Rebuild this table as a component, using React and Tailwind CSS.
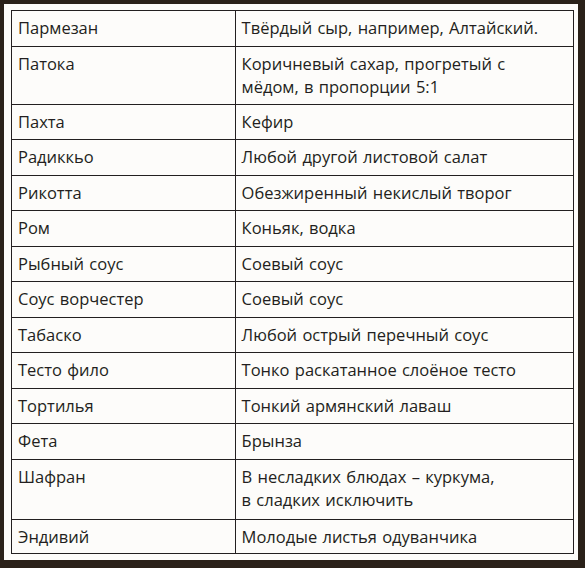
import React from "react";

const rows = [
  ["Пармезан", ["Твёрдый сыр, например, Алтайский."], "h-[36px]"],
  ["Патока", ["Коричневый сахар, прогретый с", "мёдом, в пропорции 5:1"], "h-[58px]"],
  ["Пахта", ["Кефир"], "h-[35px]"],
  ["Радиккьо", ["Любой другой листовой салат"], "h-[36px]"],
  ["Рикотта", ["Обезжиренный некислый творог"], "h-[35px]"],
  ["Ром", ["Коньяк, водка"], "h-[36px]"],
  ["Рыбный соус", ["Соевый соус"], "h-[35px]"],
  ["Соус ворчестер", ["Соевый соус"], "h-[36px]"],
  ["Табаско", ["Любой острый перечный соус"], "h-[35px]"],
  ["Тесто фило", ["Тонко раскатанное слоёное тесто"], "h-[36px]"],
  ["Тортилья", ["Тонкий армянский лаваш"], "h-[35px]"],
  ["Фета", ["Брынза"], "h-[36px]"],
  ["Шафран", ["В несладких блюдах – куркума,", "в сладких исключить"], "h-[60px]"],
  ["Эндивий", ["Молодые листья одуванчика"], "h-[34px]"],
];

export default function App() {
  return (
    <div className="w-[585px] h-[568px] bg-[#2a2119] pt-[4px] pl-[4px] pr-[7px] pb-[8px]">
      <div className="w-full h-full bg-[#fdfcfa] pt-[6px] pl-[7px] pr-[4px]">
        <table
          className="w-[563px] border-collapse text-[#231f20] text-[16.5px] leading-[23px] [word-spacing:1px]"
          style={{ fontFamily: '"Open Sans", "Noto Sans", sans-serif' }}
        >
          <colgroup>
            <col className="w-[224px]" />
            <col className="w-[339px]" />
          </colgroup>
          <tbody>
            {rows.map(([name, subst, h]) => (
              <tr key={name} className={h}>
                <td className="border border-[#231f20] align-top pl-[6px] pt-[5px] p-0">
                  {name}
                </td>
                <td className="border border-[#231f20] align-top pl-[6px] pt-[5px] p-0">
                  {subst.map((line) => (
                    <div key={line}>{line}</div>
                  ))}
                </td>
              </tr>
            ))}
          </tbody>
        </table>
      </div>
    </div>
  );
}
